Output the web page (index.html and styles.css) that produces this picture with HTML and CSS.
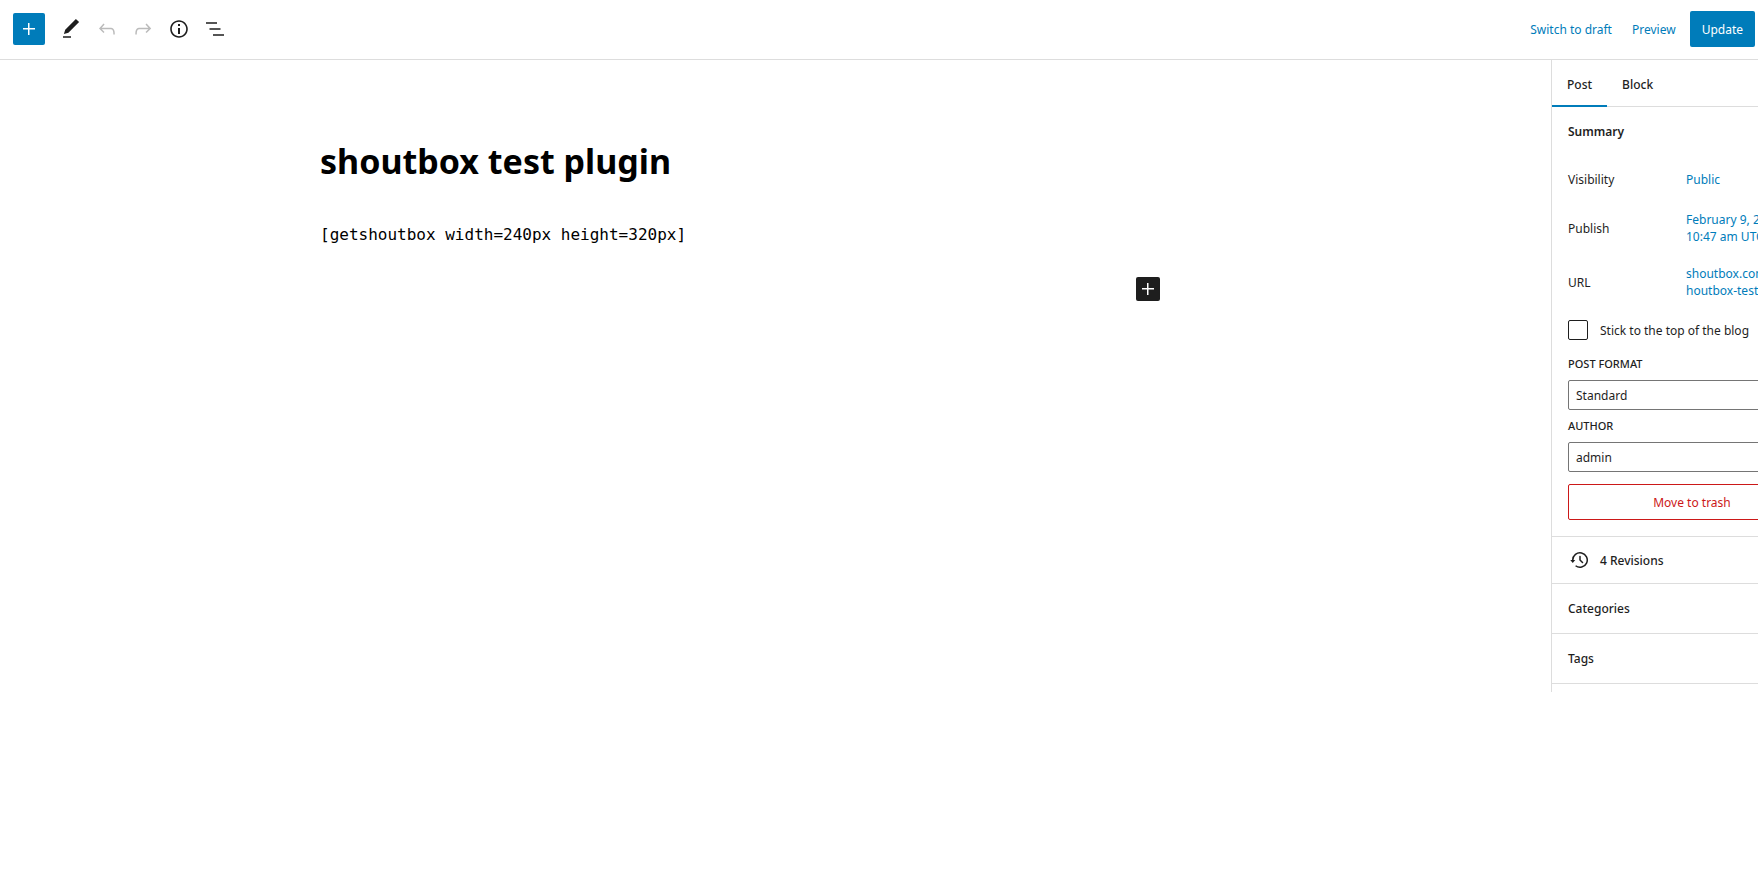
FILE: index.html
```html
<!DOCTYPE html>
<html lang="en">
<head>
<meta charset="utf-8">
<meta name="viewport" content="width=device-width, initial-scale=1">
<title>shoutbox test plugin</title>
<link rel="stylesheet" href="styles.css">
</head>
<body>
<header class="topbar">
  <div class="tools">
    <button class="inserter" type="button" aria-label="Toggle block inserter"><svg viewBox="0 0 24 24"><path d="M11 12.5V18h1.5v-5.500H18V11h-5.500V6H11v5H6v1.500z"/></svg></button>
    <button class="tool" type="button" aria-label="Tools"><svg viewBox="0 0 24 24"><path d="M20.1 5.100L16.900 2 6.200 12.700l-1.300 4.400 4.500-1.300L20.100 5.100zM4 19.200h8v1.500H4z"/></svg></button>
    <button class="tool" type="button" aria-label="Undo" disabled><svg viewBox="0 0 24 24"><path d="M18.3 11.700c-.6-.6-1.400-.9-2.300-.9H6.700l2.900-3.300-1.100-1-4.500 5L8.500 16l1-1-2.700-2.700H16c.5 0 .9.200 1.300.500 1 1 1 3.400 1 4.500v.300h1.500v-.200c0-1.500 0-4.300-1.500-5.700z"/></svg></button>
    <button class="tool" type="button" aria-label="Redo" disabled><svg viewBox="0 0 24 24"><path d="M15.600 6.500l-1.100 1 2.900 3.300H8c-.9 0-1.700.3-2.300.9-1.400 1.500-1.400 4.200-1.400 5.600v.200h1.500v-.300c0-1.100 0-3.500 1-4.500.3-.3.700-.5 1.300-.5h9.200L14.500 15l1.100 1.100 4.600-4.600-4.600-5z"/></svg></button>
    <button class="tool" type="button" aria-label="Details"><svg viewBox="0 0 24 24"><path d="M12 3.200c-4.800 0-8.800 3.900-8.800 8.800 0 4.800 3.900 8.800 8.800 8.800 4.800 0 8.800-3.900 8.800-8.800 0-4.800-4-8.800-8.800-8.800zm0 16c-4 0-7.200-3.300-7.200-7.200C4.800 8 8 4.800 12 4.800s7.200 3.300 7.200 7.200c0 4-3.200 7.200-7.200 7.200zM11 17h2v-6h-2v6zm0-8h2V7h-2v2z"/></svg></button>
    <button class="tool" type="button" aria-label="List view"><svg viewBox="0 0 24 24"><path d="M3 5.200h11v1.600H3zM6.500 11.200h11v1.600h-11zM10 17.200h11v1.600H10z"/></svg></button>
  </div>
  <div class="actions">
    <button class="link" type="button">Switch to draft</button>
    <button class="link" type="button">Preview</button>
    <button class="update" type="button">Update</button>
  </div>
</header>
<div class="workspace">
  <main class="editor">
    <article class="post">
      <h1 class="title">shoutbox test plugin</h1>
      <p class="shortcode">[getshoutbox width=240px height=320px]</p>
      <button class="add-block" type="button" aria-label="Add block"><svg viewBox="0 0 24 24"><path d="M11 12.500V18h1.500v-5.500H18V11h-5.500V6H11v5H6v1.500z"/></svg></button>
    </article>
  </main>
  <aside class="sidebar">
    <div class="tabs" role="tablist">
      <button class="tab active" type="button" role="tab" aria-selected="true">Post</button>
      <button class="tab" type="button" role="tab" aria-selected="false">Block</button>
    </div>
    <section class="summary">
      <h2 class="heading">Summary</h2>
      <div class="row"><span class="name">Visibility</span><a class="value" href="#">Public</a></div>
      <div class="row tall"><span class="name">Publish</span><a class="value" href="#">February 9, 2<br>10:47 am UTC</a></div>
      <div class="row tall"><span class="name">URL</span><a class="value" href="#">shoutbox.com<br>houtbox-test</a></div>
      <label class="check"><input type="checkbox">Stick to the top of the blog</label>
      <label class="caption" for="format">Post format</label>
      <select class="select" id="format"><option>Standard</option></select>
      <label class="caption" for="author">Author</label>
      <select class="select" id="author"><option>admin</option></select>
      <button class="trash" type="button">Move to trash</button>
    </section>
    <button class="panel revisions" type="button"><svg viewBox="0 0 24 24"><path d="M5.500 12h1.750l-2.500 3-2.500-3H4a8 8 0 113.134 6.350l.907-1.194A6.500 6.500 0 105.500 12zm9.530 1.970l-2.280-2.280V8.500a.75.75 0 00-1.500 0V12a.747.747 0 00.218.529l1.282-.840-1.280.842 2.500 2.500a.75.75 0 101.060-1.061z"/></svg>4 Revisions</button>
    <button class="panel" type="button">Categories</button>
    <button class="panel" type="button">Tags</button>
  </aside>
</div>
</body>
</html>
```
FILE: styles.css
```css
* { box-sizing: border-box; }

body {
  margin: 0;
  overflow: hidden;
  background: #fff;
  color: #1e1e1e;
  font-family: "Noto Sans", "Open Sans", sans-serif;
  font-size: 12px;
  line-height: 17px;
}

button {
  margin: 0;
  padding: 0;
  border: 0;
  background: none;
  color: inherit;
  font: inherit;
}

svg {
  display: block;
  width: 24px;
  height: 24px;
  fill: currentColor;
}

.topbar {
  display: flex;
  align-items: center;
  justify-content: space-between;
  height: 60px;
  padding: 0 3px 2px 13px;
  border-bottom: 1px solid #ddd;
}

.tools, .actions { display: flex; align-items: center; }
.tools { gap: 12px; }

.inserter {
  padding: 4px;
  border-radius: 2px;
  background: #007cba;
  color: #fff;
}

.inserter + .tool { margin-left: 2px; }
.tool:disabled { color: #bbb; }

.actions { gap: 20px; }
.link { color: #007cba; }

.update {
  height: 36px;
  margin-left: -6px;
  padding: 0 12px;
  border-radius: 2px;
  background: #007cba;
  color: #fff;
}

.link, .update { padding-top: 2px; }

.workspace { display: flex; }

.editor {
  flex: 1;
  min-width: 0;
  padding: 76px 71px 0 0;
}

.post {
  display: flex;
  flex-direction: column;
  max-width: 840px;
  margin: 0 auto;
  color: #000;
}

.title {
  margin: 0;
  font-family: "Noto Sans", sans-serif;
  font-size: 34px;
  font-weight: 700;
  line-height: 50px;
}

.shortcode {
  margin: 37px 0 30px;
  font-family: "DejaVu Sans Mono", monospace;
  font-size: 16px;
  line-height: 24px;
}

.add-block {
  align-self: flex-end;
  border-radius: 2px;
  background: #1e1e1e;
  color: #fff;
}

/* The settings column runs past the right edge of the window. */
.sidebar {
  flex: none;
  width: 281px;
  margin-right: -74px;
  padding-bottom: 8px;
  border-left: 1px solid #ddd;
}

.tabs {
  display: flex;
  height: 47px;
  border-bottom: 1px solid #ddd;
}

.tab {
  height: 47px;
  padding: 1px 15px 0;
  font-weight: 500;
}

.active { box-shadow: inset 0 -2px #007cba; }

.summary {
  display: flex;
  flex-direction: column;
  padding: 16px;
}

.heading {
  margin: 0 0 20px;
  font-size: 12px;
  font-weight: 600;
  line-height: 18px;
}

.row {
  display: flex;
  align-items: center;
  height: 36px;
  margin-bottom: 4px;
}

.tall { height: 54px; margin: 0; }
.name { width: 118px; }
.value { color: #007cba; text-decoration: none; white-space: nowrap; }

.check {
  display: flex;
  align-items: center;
  gap: 12px;
  margin: 11px 0 14px;
}

.check input {
  appearance: none;
  width: 20px;
  height: 20px;
  margin: 0;
  border: 1px solid #1e1e1e;
  border-radius: 2px;
}

.caption {
  margin-bottom: 6px;
  font-size: 11px;
  font-weight: 500;
  line-height: 20px;
  text-transform: uppercase;
}

.select {
  appearance: none;
  height: 30px;
  margin-bottom: 6px;
  padding: 0 7px;
  border: 1px solid #757575;
  border-radius: 2px;
  background: #fff;
  color: #1e1e1e;
  font: inherit;
}

.trash {
  height: 36px;
  margin-top: 6px;
  border: 1px solid #cc1818;
  border-radius: 2px;
  color: #cc1818;
}

.panel {
  display: flex;
  align-items: center;
  width: 100%;
  height: 50px;
  padding: 0 16px;
  border-bottom: 1px solid #ddd;
  font-weight: 500;
}

.revisions {
  gap: 8px;
  height: 48px;
  border-top: 1px solid #ddd;
}
```
